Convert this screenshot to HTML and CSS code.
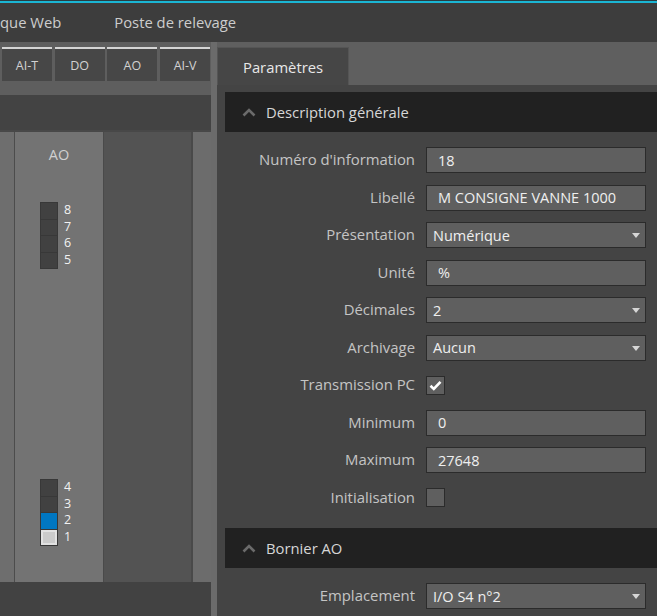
FILE: index.html
```html
<!DOCTYPE html>
<html lang="fr">
<head>
<meta charset="utf-8">
<title>Paramètres</title>
<link rel="stylesheet" href="styles.css">
</head>
<body>
<header class="topbar">
  <nav class="menu">
    <span class="menu-item first">que Web</span>
    <span class="menu-item">Poste de relevage</span>
  </nav>
</header>
<div class="main">
  <aside class="left">
    <div class="module-tabs">
      <div class="mtab">AI-T</div>
      <div class="mtab">DO</div>
      <div class="mtab">AO</div>
      <div class="mtab">AI-V</div>
    </div>
    <div class="toolbar"></div>
    <div class="columns">
      <div class="col col-edge"></div>
      <div class="col col-ao">
        <div class="col-title">AO</div>
        <div class="slot-group top">
          <div class="slots">
            <div class="slot"></div>
            <div class="slot"></div>
            <div class="slot"></div>
            <div class="slot"></div>
          </div>
          <div class="nums">
            <span>8</span><span>7</span><span>6</span><span>5</span>
          </div>
        </div>
        <div class="slot-group bottom">
          <div class="slots">
            <div class="slot"></div>
            <div class="slot"></div>
            <div class="slot active"></div>
            <div class="slot on"></div>
          </div>
          <div class="nums">
            <span>4</span><span>3</span><span>2</span><span>1</span>
          </div>
        </div>
      </div>
      <div class="col col-dark"></div>
      <div class="col col-last"></div>
    </div>
    <div class="left-foot"></div>
  </aside>
  <div class="separator"></div>
  <section class="right">
    <div class="param-tabs">
      <div class="ptab">Paramètres</div>
    </div>
    <div class="content">
      <div class="section-head">
        <svg class="chev" width="14" height="9" viewBox="0 0 14 9"><path d="M1.5 7.5 L7 2 L12.5 7.5" fill="none" stroke="#6b6b6b" stroke-width="2.6"/></svg>
        <span>Description générale</span>
      </div>
      <div class="form">
        <div class="row"><label>Numéro d'information</label><div class="field text">18</div></div>
        <div class="row"><label>Libellé</label><div class="field text">M CONSIGNE VANNE 1000</div></div>
        <div class="row"><label>Présentation</label><div class="field select">Numérique<span class="arrow"></span></div></div>
        <div class="row"><label>Unité</label><div class="field text">%</div></div>
        <div class="row"><label>Décimales</label><div class="field select">2<span class="arrow"></span></div></div>
        <div class="row"><label>Archivage</label><div class="field select">Aucun<span class="arrow"></span></div></div>
        <div class="row"><label>Transmission PC</label><div class="check"><svg width="13" height="11" viewBox="0 0 13 11"><path d="M1.5 5.8 L4.8 9 L11.5 1.8" fill="none" stroke="#ffffff" stroke-width="2.6"/></svg></div></div>
        <div class="row"><label>Minimum</label><div class="field text">0</div></div>
        <div class="row"><label>Maximum</label><div class="field text">27648</div></div>
        <div class="row"><label>Initialisation</label><div class="check"></div></div>
      </div>
      <div class="section-head second">
        <svg class="chev" width="14" height="9" viewBox="0 0 14 9"><path d="M1.5 7.5 L7 2 L12.5 7.5" fill="none" stroke="#6b6b6b" stroke-width="2.6"/></svg>
        <span>Bornier AO</span>
      </div>
      <div class="form">
        <div class="row"><label>Emplacement</label><div class="field select">I/O S4 n°2<span class="arrow"></span></div></div>
      </div>
    </div>
  </section>
</div>
</body>
</html>
```

FILE: styles.css
```css
* { box-sizing: border-box; }
html, body { margin: 0; padding: 0; }
body {
  width: 657px;
  height: 616px;
  overflow: hidden;
  background: #444444;
  font-family: "Open Sans", "Noto Sans", sans-serif;
  color: #d0d0d0;
}
.topbar {
  height: 42px;
  background: #3d3d3d;
  border-top: 1px solid #2a3d42;
  box-shadow: inset 0 2px 0 #1bb6d4;
}
.menu {
  display: flex;
  align-items: center;
  height: 41px;
  padding-top: 1px;
  gap: 53px;
  font-size: 14.8px;
  color: #cdcdcd;
}
.menu-item.first { margin-left: 0; }

.main {
  display: flex;
  height: 574px;
}
.left {
  width: 211px;
  display: flex;
  flex-direction: column;
}
.module-tabs {
  height: 53px;
  background: #5e5e5e;
  display: flex;
  gap: 2.7px;
  padding: 5px 0 0 2px;
}
.mtab {
  width: 50px;
  height: 34px;
  background: #474747;
  border-top: 2px solid #d4d4d4;
  color: #d2d2d2;
  font-size: 12.5px;
  display: flex;
  align-items: center;
  justify-content: center;
}
.toolbar {
  height: 37px;
  background: #434343;
  border-bottom: 2px solid #484848;
}
.columns {
  height: 450px;
  display: flex;
}
.col { height: 100%; }
.col-edge { width: 15px; background: #6e6e6e; border-right: 1px solid #4c4c4c; }
.col-ao {
  width: 89px;
  background: #737373;
  border-right: 1px solid #4a4a4a;
  display: flex;
  flex-direction: column;
  align-items: flex-start;
  padding-left: 25px;
}
.col-dark { width: 89px; background: #535353; border-right: 2px solid #494949; }
.col-last { flex: 1; background: #6c6c6c; }
.left-foot { flex: 1; background: #424242; }

.col-title {
  width: 38px;
  text-align: center;
  margin-top: 13px;
  font-size: 14.5px;
  color: #d0d0d0;
  line-height: 20px;
}
.slot-group {
  display: flex;
  gap: 6px;
}
.slot-group.top { margin-top: 37px; }
.slot-group.bottom { margin-top: 210px; }
.slots {
  width: 18px;
  background: #383838;
  border: 1px solid #383838;
  display: flex;
  flex-direction: column;
  gap: 1px;
}
.slot {
  height: 15.5px;
  background: #414141;
}
.slot.active { background: #0077c2; }
.slot.on { background: #cbcbcb; border: 2px solid #e2e2e2; }
.nums {
  display: flex;
  flex-direction: column;
  padding-top: 0;
}
.nums span {
  height: 16.5px;
  line-height: 16px;
  font-size: 12.5px;
  color: #f2f2f2;
}

.separator { width: 6px; background: #6b6b6b; }
.right {
  flex: 1;
  display: flex;
  flex-direction: column;
  background: #444444;
}
.param-tabs {
  height: 43px;
  background: #5f5f5f;
  padding-top: 5px;
  display: flex;
}
.ptab {
  width: 132px;
  height: 38px;
  background: #464646;
  border: 1px solid #555555;
  border-bottom: none;
  padding-left: 25px;
  display: flex;
  align-items: center;
  font-size: 14.8px;
  color: #e8e8e8;
}
.content {
  padding: 7px 0 0 8px;
}
.section-head {
  height: 40px;
  background: #212121;
  display: flex;
  align-items: center;
  padding-left: 17px;
  gap: 10px;
  font-size: 14.8px;
  color: #d6d6d6;
}
.section-head.second { margin-top: 17.5px; }
.form {
  display: flex;
  flex-direction: column;
  gap: 11.5px;
  padding: 15px 11px 0 0;
}
.row {
  display: grid;
  grid-template-columns: 190px 220px;
  column-gap: 11px;
  height: 26px;
  align-items: center;
}
.row label {
  text-align: right;
  font-size: 14.9px;
  color: #c4c4c4;
  line-height: 20px;
  margin-top: -2px;
}
.field {
  height: 26px;
  background: #5f5f5f;
  border: 1px solid #2b2b2b;
  display: flex;
  align-items: center;
  font-size: 14.5px;
  color: #efefef;
  position: relative;
}
.field.text { padding-left: 11px; }
.field.select { padding-left: 6px; }
.arrow {
  position: absolute;
  right: 5px;
  top: 10px;
  width: 0;
  height: 0;
  border-left: 4.5px solid transparent;
  border-right: 4.5px solid transparent;
  border-top: 5px solid #d6d6d6;
}
.check {
  width: 19px;
  height: 19px;
  background: #5f5f5f;
  border: 1px solid #2b2b2b;
  display: flex;
  align-items: center;
  justify-content: center;
}
```
